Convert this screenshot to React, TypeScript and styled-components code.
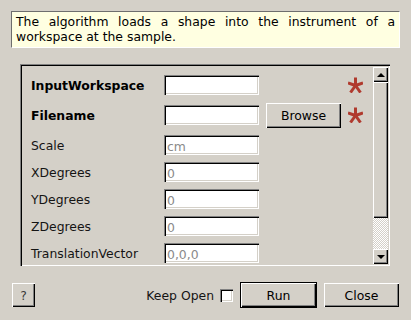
import styled, { createGlobalStyle } from 'styled-components';

const GlobalStyle = createGlobalStyle`
  html, body {
    margin: 0;
    padding: 0;
    background: #d4d0c8;
  }
  body {
    font-family: "DejaVu Sans", "Liberation Sans", sans-serif;
    font-size: 12.4px;
    color: #000;
  }
`;

// 속성 목록 (필수 여부, 찾아보기 버튼, 기본값)
const fields = [
  { name: 'InputWorkspace', required: true, browse: false, hint: '', space: 10 },
  { name: 'Filename', required: true, browse: true, hint: '', space: 10 },
  { name: 'Scale', required: false, browse: false, hint: 'cm', space: 7 },
  { name: 'XDegrees', required: false, browse: false, hint: '0', space: 7 },
  { name: 'YDegrees', required: false, browse: false, hint: '0', space: 7 },
  { name: 'ZDegrees', required: false, browse: false, hint: '0', space: 7 },
  { name: 'TranslationVector', required: false, browse: false, hint: '0,0,0', space: 7 },
];

const Asterisk = () => (
  <svg width="15" height="16" viewBox="0 0 15 16">
    <g stroke="#b03a2e" strokeWidth="3" strokeLinecap="butt">
      <line x1="7.5" y1="8.5" x2="7.5" y2="0.5" />
      <line x1="7.5" y1="8.5" x2="0" y2="6" />
      <line x1="7.5" y1="8.5" x2="15" y2="6" />
      <line x1="7.5" y1="8.5" x2="2.5" y2="15.5" />
      <line x1="7.5" y1="8.5" x2="12.5" y2="15.5" />
    </g>
  </svg>
);

const App = () => {
  return (
    <Window>
      <GlobalStyle />
      <Description>
        The algorithm loads a shape into the instrument of a workspace at the sample.
      </Description>

      <Panel>
        <Form>
          {fields.map((f) => (
            <Row key={f.name} $space={f.space}>
              <Label $bold={f.required}>{f.name}</Label>
              <Input placeholder={f.hint} />
              {f.browse ? <Button $w={75} $h={25}>Browse</Button> : <span />}
              {f.required ? <Asterisk /> : <span />}
            </Row>
          ))}
        </Form>
        <ScrollBar>
          <ArrowButton>
            <Triangle $up />
          </ArrowButton>
          <Thumb />
          <Track />
          <ArrowButton>
            <Triangle />
          </ArrowButton>
        </ScrollBar>
      </Panel>

      <Footer>
        <Button $w={23} $h={24} $muted>?</Button>
        <Spacer />
        <KeepOpen>
          Keep Open
          <CheckBox />
        </KeepOpen>
        <DefaultButton>
          <Button $w={75} $h={24}>Run</Button>
        </DefaultButton>
        <Button $w={75} $h={24}>Close</Button>
      </Footer>
    </Window>
  );
};

export default App;

const Window = styled.div`
  width: 411px;
  height: 320px;
  box-sizing: border-box;
  padding: 11px 11px 0;
  display: flex;
  flex-direction: column;
`;

const Description = styled.div`
  height: 37px;
  box-sizing: border-box;
  padding: 2px 4px 0 4px;
  background: #ffffe1;
  border-top: 1px solid #6e6e6e;
  border-left: 1px solid #6e6e6e;
  border-right: 1px solid #ffffff;
  border-bottom: 1px solid #ffffff;
  text-align: justify;
  line-height: 15px;
`;

const Panel = styled.div`
  margin: 16px 10px 0 9px;
  height: 202px;
  box-sizing: border-box;
  display: flex;
  box-shadow: inset 1px 1px #808080, inset 2px 2px #000000,
    inset -1px -1px #ffffff, inset -2px -2px #d4d0c8;
  padding: 2px;
`;

const Form = styled.div`
  flex: 1;
  padding: 9px 0 0 9px;
  display: flex;
  flex-direction: column;
`;

const Row = styled.div<{ $space: number }>`
  display: grid;
  grid-template-columns: 126px 95px 75px 15px;
  grid-template-rows: 20px;
  column-gap: 7px;
  align-items: center;
  height: 20px;
  margin-bottom: ${(p) => p.$space}px;
`;

const Label = styled.div<{ $bold?: boolean }>`
  font-weight: ${(p) => (p.$bold ? 700 : 400)};
  color: ${(p) => (p.$bold ? '#000' : '#141414')};
  white-space: nowrap;
`;

const Input = styled.input`
  width: 95px;
  height: 20px;
  box-sizing: border-box;
  border: none;
  outline: none;
  padding: 2px 3px 0;
  font-family: inherit;
  font-size: 12.4px;
  background: #ffffff;
  box-shadow: inset 1px 1px #808080, inset 2px 2px #000000,
    inset -1px -1px #ffffff, inset -2px -2px #d4d0c8;

  &::placeholder {
    color: #8a8a8a;
  }
`;

const Button = styled.button<{ $w: number; $h: number; $muted?: boolean }>`
  width: ${(p) => p.$w}px;
  height: ${(p) => p.$h}px;
  padding: 0;
  border: none;
  background: #d4d0c8;
  font-family: inherit;
  font-size: 12.4px;
  color: ${(p) => (p.$muted ? '#3a3a3a' : '#000')};
  box-shadow: inset 1px 1px #ffffff, inset -1px -1px #000000,
    inset -2px -2px #808080;
`;

const DefaultButton = styled.div`
  display: flex;
  border: 1px solid #000;
`;

const ScrollBar = styled.div`
  width: 15px;
  margin: 1px 0 0;
  display: flex;
  flex-direction: column;
`;

const ArrowButton = styled.div`
  height: 15px;
  flex-shrink: 0;
  display: flex;
  align-items: center;
  justify-content: center;
  background: #d4d0c8;
  box-shadow: inset 1px 1px #ffffff, inset -1px -1px #000000,
    inset -2px -2px #808080;
`;

const Triangle = styled.div<{ $up?: boolean }>`
  width: 0;
  height: 0;
  border-left: 4px solid transparent;
  border-right: 4px solid transparent;
  ${(p) =>
    p.$up ? 'border-bottom: 4px solid #000;' : 'border-top: 4px solid #000;'}
`;

const Thumb = styled.div`
  height: 136px;
  flex-shrink: 0;
  background: #d4d0c8;
  box-shadow: inset 1px 1px #ffffff, inset -1px -1px #000000,
    inset -2px -2px #808080;
`;

const Track = styled.div`
  flex: 1;
  background-color: #d4d0c8;
  background-image: repeating-conic-gradient(
    #ffffff 0 25%,
    #d4d0c8 0 50%
  );
  background-size: 2px 2px;
`;

const Footer = styled.div`
  margin-top: 16px;
  padding: 0 1px;
  display: flex;
  align-items: center;
  gap: 7px;
`;

const Spacer = styled.div`
  flex: 1;
`;

const KeepOpen = styled.label`
  display: flex;
  align-items: center;
  gap: 6px;
  color: #141414;
`;

const CheckBox = styled.span`
  width: 13px;
  height: 13px;
  box-sizing: border-box;
  background: #ffffff;
  box-shadow: inset 1px 1px #808080, inset 2px 2px #000000,
    inset -1px -1px #ffffff, inset -2px -2px #d4d0c8;
`;
